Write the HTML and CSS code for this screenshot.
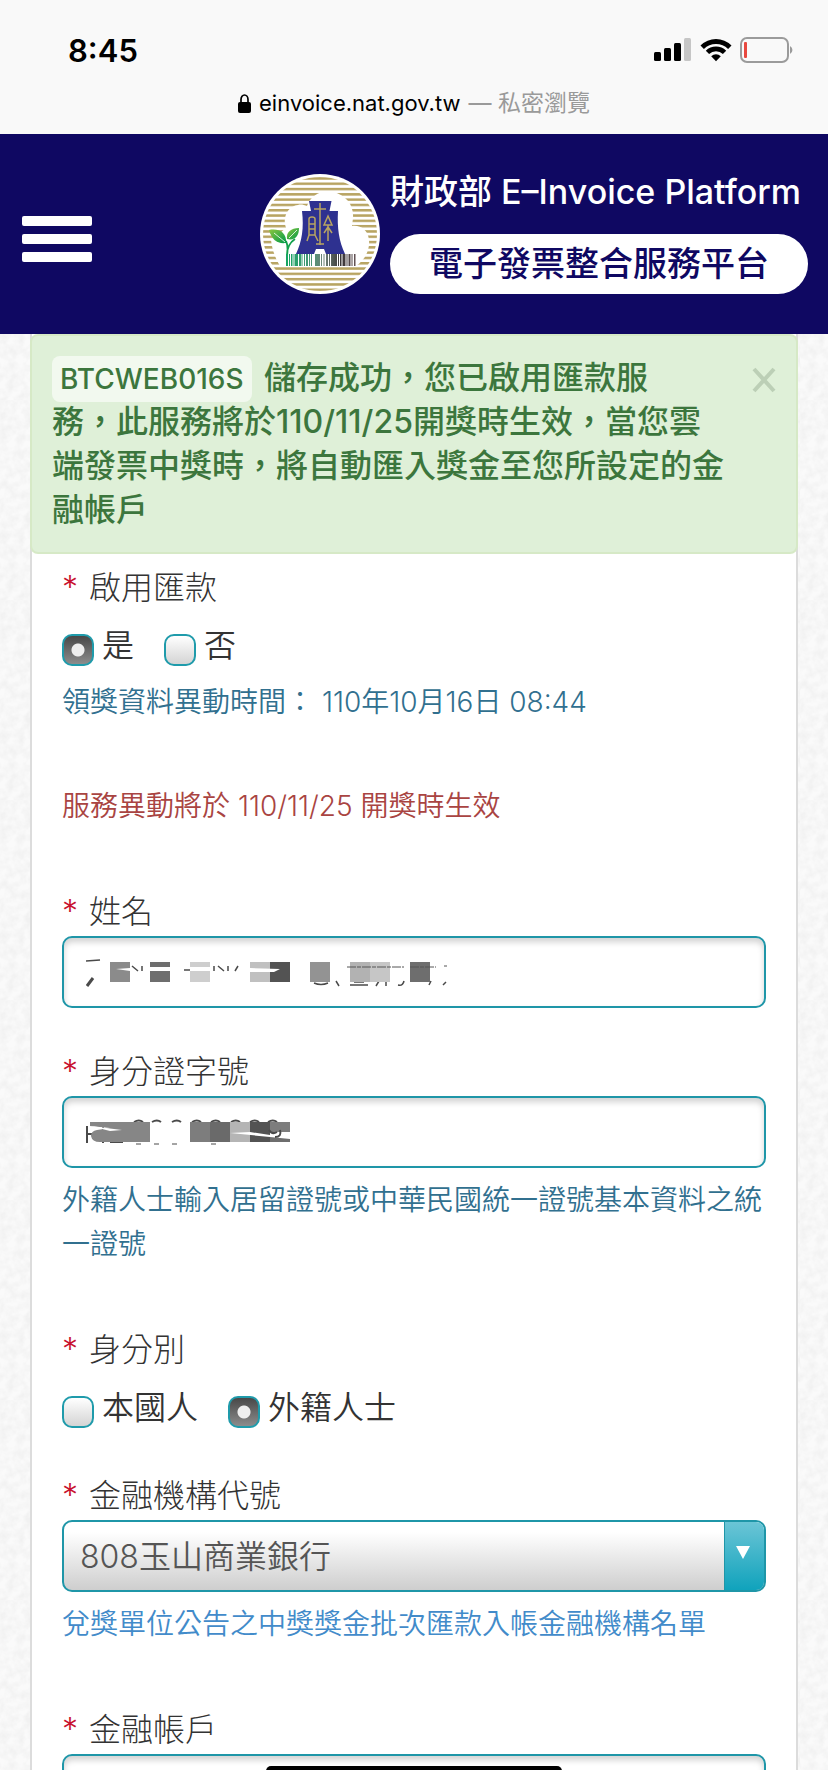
FILE: index.html
```html
<!DOCTYPE html>
<html lang="zh-Hant">
<head>
    <meta charset="UTF-8">
    <meta name="viewport" content="width=device-width, initial-scale=1.0">
    <title>電子發票整合服務平台</title>
    <link rel="stylesheet" href="styles.css">
</head>
<body>
    <div class="browser-bar">
        <div class="status-row">
            <span class="time">8:45</span>
            <div class="status-icons">
                <svg width="38" height="24" viewBox="0 0 38 24">
                    <rect x="0" y="14" width="7" height="9" rx="1.5"/>
                    <rect x="10" y="10" width="7" height="13" rx="1.5"/>
                    <rect x="20" y="5" width="7" height="18" rx="1.5"/>
                    <rect x="30" y="0" width="7" height="23" rx="1.5" fill="#c6c6c6"/>
                </svg>
                <svg width="32" height="24" viewBox="0 0 32 24">
                    <path d="M0.5 7.5a22 22 0 0 1 31 0l-3.4 3.4a17.2 17.2 0 0 0-24.2 0z"/>
                    <path d="M5.8 12.8a14.5 14.5 0 0 1 20.4 0l-3.3 3.3a9.8 9.8 0 0 0-13.8 0z"/>
                    <path d="M11.2 18.2a7 7 0 0 1 9.6 0L16 23.3z"/>
                </svg>
                <svg width="54" height="26" viewBox="0 0 54 26">
                    <rect x="1" y="1" width="47" height="24" rx="6" fill="none" stroke="#9b9b9b" stroke-width="2"/>
                    <path d="M50 9a4.5 4.5 0 0 1 0 8z" fill="#9b9b9b"/>
                    <rect x="4" y="5" width="3" height="16" rx="1" fill="#e8483f"/>
                </svg>
            </div>
        </div>
        <div class="address">
            <svg width="13" height="19" viewBox="0 0 13 19">
                <rect x="0" y="8" width="13" height="11" rx="2"/>
                <path d="M3 9V5.5a3.5 4.5 0 0 1 7 0V9" fill="none" stroke="#000" stroke-width="1.7"/>
            </svg>
            <span class="host">einvoice.nat.gov.tw</span>
            <span class="private">— 私密瀏覽</span>
        </div>
    </div>

    <header class="site-header">
        <button class="menu-button" type="button" aria-label="選單">
            <span class="bar"></span>
            <span class="bar"></span>
            <span class="bar"></span>
        </button>
        <div class="brand">
            <svg class="logo" width="120" height="120" viewBox="0 0 120 120">
                <defs>
                    <pattern id="stripes" x="0" y="3.2" width="20" height="5.3" patternUnits="userSpaceOnUse">
                        <rect width="20" height="2.5" fill="#b8a462"/>
                    </pattern>
                    <linearGradient id="leaf" x1="0" y1="0" x2="1" y2="1">
                        <stop offset="0" stop-color="#8cc63f"/>
                        <stop offset="1" stop-color="#009a48"/>
                    </linearGradient>
                    <linearGradient id="ink" gradientUnits="userSpaceOnUse" x1="26" y1="0" x2="95" y2="0">
                        <stop offset="0" stop-color="#14a562"/>
                        <stop offset="0.3" stop-color="#3f9a74"/>
                        <stop offset="0.55" stop-color="#6f8378"/>
                        <stop offset="0.8" stop-color="#383436"/>
                        <stop offset="1" stop-color="#625254"/>
                    </linearGradient>
                </defs>
                <circle cx="60" cy="60" r="60" fill="#fff"/>
                <circle cx="60" cy="60" r="57" fill="url(#stripes)"/>
                <path d="M20 92C15 84 12 75 11 66L26 54C22 43 28 32 38 31C41 30 44 31 47 32C51 21 61 16 73 18C86 21 94 31 93 44L92 52C101 51 108 56 109 66C110 76 105 86 96 92z" fill="#fff"/>
                <path d="M49 27h22.5l-2 10H78c-1 17 1 30 7 43H66l-2-5h-8l-2 5H36c6-13 8-26 6-43h9z" fill="#2e3190"/>
                <g fill="none" stroke="#b8a462" stroke-width="1.5">
                    <path d="M60 29v42M54 35h12M56 70h8"/>
                    <path d="M49 45q0-2 3-2t3 2v16h-6zM49 50h6M49 55h6M49 61l-2 6M55 61l3 6"/>
                    <path d="M68 42l4 9h-8zM68 51v16M68 53l-4 6M68 53l4 6"/>
                </g>
                <path d="M27 82c1-7 1-11-1-15M27 81c0-7 2-12 8-16" fill="none" stroke="#12a04b" stroke-width="1.8"/>
                <path d="M9 56c9-2 18 2 17 13C17 70 12 66 9 56z" fill="url(#leaf)"/>
                <path d="M39 54c0 8-4 13-12 11c-1-7 4-11 12-11z" fill="url(#leaf)"/>
                <path d="M14 59l11 9M37 56l-8 8" stroke="#fff" stroke-width="0.8"/>
                <g fill="url(#ink)">
                    <path d="M26 80h2v12h-2zM29 80h1v12h-1zM31 80h1.5v12H31zM33.5 80h1v12h-1zM35 80h3v12h-3zM39 80h2v12h-2zM41.5 80h1v12h-1zM44 80h1v12h-1z"/>
                    <path d="M46 80h2v12h-2zM49 80h1v12h-1zM51 80h1v12h-1zM55 80h5v12h-5zM61 80h1v12h-1zM63.5 80h1v12h-1zM66 80h2v12h-2zM69 80h1v12h-1z"/>
                    <path d="M71 80h6v12h-6zM78 80h1v12h-1zM80 80h1.5v12H80zM82.5 80h3v12h-3zM86.5 80h1v12h-1zM88.5 80h2v12h-2zM91.5 80h1v12h-1zM94 80h1.5v12H94z"/>
                </g>
            </svg>
            <div class="brand-text">
                <div class="ministry">財政部 E–Invoice Platform</div>
                <h1 class="site-name">電子發票整合服務平台</h1>
            </div>
        </div>
    </header>

    <main class="panel">
        <div class="alert" role="alert">
            <button class="close" type="button" aria-label="關閉">
                <svg width="24" height="28" viewBox="0 0 24 28">
                    <path d="M2 3l20 22M22 3L2 25" stroke="#bccfb6" stroke-width="4"/>
                </svg>
            </button>
            <span class="code">BTCWEB016S</span>
            儲存成功，您已啟用匯款服務，此服務將於110/11/25開獎時生效，當您雲端發票中獎時，將自動匯入獎金至您所設定的金融帳戶
        </div>

        <form class="form">
            <fieldset class="group">
                <legend class="label"><span class="star">*</span>啟用匯款</legend>
                <div class="radios">
                    <label class="radio"><input type="radio" name="enable" checked>是</label>
                    <label class="radio"><input type="radio" name="enable">否</label>
                </div>
                <p class="help updated">領獎資料異動時間： 110年10月16日 08:44</p>
            </fieldset>

            <p class="help notice">服務異動將於 110/11/25 開獎時生效</p>

            <div class="group">
                <label class="label" for="name"><span class="star">*</span>姓名</label>
                <div class="field">
                    <input class="text-box" type="text" id="name">
                    <!-- masked value -->
                    <svg class="mask" width="370" height="30" viewBox="0 0 370 30">
                        <g fill="none" stroke="#4a4a4a" stroke-width="1.5">
                            <path d="M0 3l14-1"/>
                            <path d="M7 20l-6 8" stroke-width="3"/>
                            <path d="M30 11l8-3M42 8v5M46 8l6 5M56 8v5M98 12h8l4-4M114 8v5M128 8v5M132 8l6 5M142 8v5M152 8l-3 5"/>
                            <path d="M228 25q7 3 14 0M250 23l3 5M264 27h18M268 24h10M293 23l-3 5M300 23v5M312 27q5 1 6-4M345 23l-2 4M357 27l3-3"/>
                        </g>
                        <rect x="24" y="4" width="20" height="20" fill="#8b8b8b"/>
                        <rect x="64" y="4" width="20" height="20" fill="#6e6e6e"/>
                        <rect x="104" y="4" width="20" height="20" fill="#cecece"/>
                        <rect x="164" y="4" width="20" height="20" fill="#c0c0c0"/>
                        <rect x="184" y="4" width="20" height="20" fill="#535353"/>
                        <rect x="224" y="4" width="20" height="20" fill="#939393"/>
                        <rect x="264" y="4" width="20" height="20" fill="#b2b2b2"/>
                        <rect x="284" y="4" width="20" height="20" fill="#c6c6c6"/>
                        <rect x="324" y="4" width="20" height="20" fill="#6e6e6e"/>
                        <path d="M30 11l14-1v3zM64 9h20v4H64zM104 9h20v4h-20zM164 10l30 1-6 3h-24z" fill="#fff"/>
                        <path d="M261 9h57M324 9h26M358 8h3" stroke="#555" stroke-dasharray="9 1 4 1"/>
                    </svg>
                </div>
            </div>

            <div class="group">
                <label class="label" for="id-number"><span class="star">*</span>身分證字號</label>
                <div class="field">
                    <input class="text-box" type="text" id="id-number">
                    <svg class="mask" width="370" height="30" viewBox="0 0 370 30">
                        <g fill="none" stroke="#4a4a4a" stroke-width="2">
                            <path d="M1 8v17M1 16h14M17 8v17M25 9v15h12"/>
                            <path d="M48 4q5-3 9 0M66 4q5-3 9 0M86 4q5-3 9 0M106 4q5-3 9 0M125 4q5-3 9 0M145 4q5-3 9 0M164 4q5-3 9 0M182 4q5-3 9 0"/>
                            <path d="M50 26h5M68 26h5M86 26h5M125 26h5" stroke-width="1"/>
                        </g>
                        <path d="M4 4h60v20H14q-8 0-9-6q0-5 6-6l13-2-20-2z" fill="#868686"/>
                        <rect x="104" y="4" width="20" height="20" fill="#7d7d7d"/>
                        <rect x="124" y="4" width="20" height="20" fill="#6a6a6a"/>
                        <rect x="144" y="4" width="20" height="20" fill="#b5b5b5"/>
                        <rect x="164" y="4" width="20" height="20" fill="#535353"/>
                        <rect x="184" y="4" width="20" height="10" fill="#7d7d7d"/>
                        <path d="M184 19l20 2v3h-20z" fill="#6e6e6e"/>
                        <path d="M4 8l32 4-12 1zM124 14l20 1 40 4v-2l-20-3-20 1z" fill="#fff"/>
                        <path d="M183 12q3 5 8 2M194 12q2 7-5 7" fill="none" stroke="#4a4a4a" stroke-width="2"/>
                    </svg>
                </div>
                <p class="help">外籍人士輸入居留證號或中華民國統一證號基本資料之統一證號</p>
            </div>

            <fieldset class="group">
                <legend class="label"><span class="star">*</span>身分別</legend>
                <div class="radios">
                    <label class="radio"><input type="radio" name="identity">本國人</label>
                    <label class="radio"><input type="radio" name="identity" checked>外籍人士</label>
                </div>
            </fieldset>

            <div class="group">
                <label class="label" for="bank"><span class="star">*</span>金融機構代號</label>
                <div class="select-wrap">
                    <select id="bank">
                        <option>808玉山商業銀行</option>
                    </select>
                    <span class="arrow"></span>
                </div>
                <p class="help"><a href="#">兌獎單位公告之中獎獎金批次匯款入帳金融機構名單</a></p>
            </div>

            <div class="group">
                <label class="label" for="account"><span class="star">*</span>金融帳戶</label>
                <div class="field">
                    <input class="text-box" type="text" id="account">
                </div>
            </div>
        </form>
    </main>

    <div class="home-indicator"></div>
</body>
</html>
```

FILE: styles.css
```css
* {
    margin: 0;
    padding: 0;
    box-sizing: border-box;
}

body {
    font-family: Inter, "Noto Sans CJK TC", sans-serif;
    height: 100vh;
    overflow: hidden;
    color: #333;
    background: #fafafa url("data:image/svg+xml,%3Csvg xmlns='http://www.w3.org/2000/svg' width='200' height='200'%3E%3Cfilter id='n'%3E%3CfeTurbulence type='fractalNoise' baseFrequency='.12' numOctaves='3' stitchTiles='stitch'/%3E%3CfeColorMatrix values='0 0 0 0 0 0 0 0 0 0 0 0 0 0 0 .07 0 0 0 -.022'/%3E%3C/filter%3E%3Crect width='200' height='200' filter='url(%23n)'/%3E%3C/svg%3E");
}

svg {
    display: block;
}

/* Browser chrome */
.browser-bar {
    height: 134px;
    padding-top: 30px;
    background: #f9f9f9;
    color: #000;
}

.status-row {
    display: flex;
    justify-content: space-between;
    align-items: center;
    height: 40px;
    padding: 0 34px 0 68px;
}

.time {
    font-size: 31px;
    font-weight: 600;
}

.status-icons {
    display: flex;
    align-items: center;
    gap: 8px;
}

.address {
    display: flex;
    justify-content: center;
    align-items: center;
    gap: 8px;
    height: 36px;
    margin-top: 15px;
}

.host {
    font-size: 22px;
}

.private {
    color: #9a9a9a;
    font-size: 23px;
    line-height: 24px;
}

/* Header */
.site-header {
    display: flex;
    justify-content: space-between;
    align-items: center;
    padding: 40px 20px 40px 22px;
    background: #0f0862;
}

.menu-button {
    display: flex;
    flex-direction: column;
    gap: 8px;
    width: 70px;
    padding-top: 10px;
    border: none;
    background: none;
    cursor: pointer;
}

.bar {
    height: 10px;
    border-radius: 2px;
    background: #fff;
}

.brand {
    display: flex;
    gap: 10px;
}

.brand-text {
    display: flex;
    flex-direction: column;
    justify-content: space-between;
    width: 418px;
}

.ministry {
    color: #fff;
    font-size: 34px;
    font-weight: 500;
    line-height: 36px;
    white-space: nowrap;
}

.site-name {
    border-radius: 30px;
    background: #fff;
    color: #0f0862;
    font-size: 34px;
    font-weight: 500;
    line-height: 60px;
    text-align: center;
}

/* Panel */
.panel {
    margin: 0 30px;
    border: 2px solid #dcdcdc;
    border-top: none;
    background: #fff;
}

.alert {
    margin: 0 -2px;
    padding: 20px 70px 20px 20px;
    border: 2px solid #d6e9c6;
    border-radius: 8px;
    background: #dff0d8;
    color: #3c763d;
    font-size: 32px;
    font-weight: 500;
    line-height: 44px;
}

.close {
    float: right;
    margin: 10px -50px 0 50px;
    border: none;
    background: none;
    cursor: pointer;
}

.code {
    margin-right: 4px;
    padding: 6px 8px;
    border-radius: 8px;
    background: rgba(255, 255, 255, 0.6);
    font-size: 28px;
    line-height: 28px;
}

/* Form */
.form {
    padding: 12px 30px 0;
}

.group {
    margin-bottom: 42px;
    border: none;
}

.label {
    display: block;
    margin-bottom: 2px;
    font-size: 32px;
    font-weight: 300;
    line-height: 44px;
}

.star {
    margin-right: 11px;
    color: #c8102e;
}

.radios {
    display: flex;
    gap: 30px;
    padding: 14px 0 4px;
}

.radio {
    display: flex;
    align-items: flex-end;
    gap: 8px;
    font-size: 32px;
    font-weight: 350;
    line-height: 40px;
}

.radio input {
    appearance: none;
    width: 32px;
    height: 32px;
    border: 2px solid #1f9bab;
    border-radius: 10px;
    background: linear-gradient(#fff, #d4d4d4);
}

.radio input:checked {
    background:
        radial-gradient(circle at 50% 50%, #eee 0 6px, transparent 7px),
        linear-gradient(#484848, #8c8c8c);
}

.help {
    margin: 10px 0 62px;
    color: #31708f;
    font-size: 28px;
    font-weight: 350;
    line-height: 44px;
}

.help a {
    color: #428bca;
    text-decoration: none;
}

.updated {
    margin-bottom: 60px;
}

.notice {
    margin-top: 0;
    color: #a94442;
}

.group:has(.help) {
    margin-bottom: 0;
}

.field,
.select-wrap {
    position: relative;
}

.text-box {
    display: block;
    width: 100%;
    height: 72px;
    padding: 0 24px;
    border: 2px solid #1f96a8;
    border-radius: 10px;
    background: #fff;
    box-shadow: inset 0 4px 6px rgba(0, 0, 0, 0.18);
    font: inherit;
    font-size: 32px;
}

/* the mask lies over the typed text */
.mask {
    position: absolute;
    top: 22px;
    left: 24px;
}

.select-wrap select {
    appearance: none;
    display: block;
    width: 100%;
    height: 72px;
    padding: 0 60px 0 16px;
    border: 2px solid #1f96a8;
    border-radius: 10px;
    background: linear-gradient(#fff 15%, #cecece);
    color: #555;
    font-family: inherit;
    font-size: 32px;
    font-weight: 350;
}

.arrow {
    position: absolute;
    top: 2px;
    right: 2px;
    bottom: 2px;
    display: flex;
    justify-content: center;
    align-items: center;
    width: 40px;
    border-radius: 0 8px 8px 0;
    border-left: 1px solid #1f96a8;
    background: linear-gradient(#6bc5d6, #10a3bc);
    pointer-events: none;
}

.arrow::before {
    content: "";
    margin: 0 4px 8px 0;
    border: 7px solid transparent;
    border-top: 13px solid #fff;
    border-bottom: none;
}

.home-indicator {
    position: fixed;
    left: 50%;
    bottom: -6px;
    width: 296px;
    height: 10px;
    border-radius: 5px;
    background: #000;
    transform: translateX(-50%);
}
```
